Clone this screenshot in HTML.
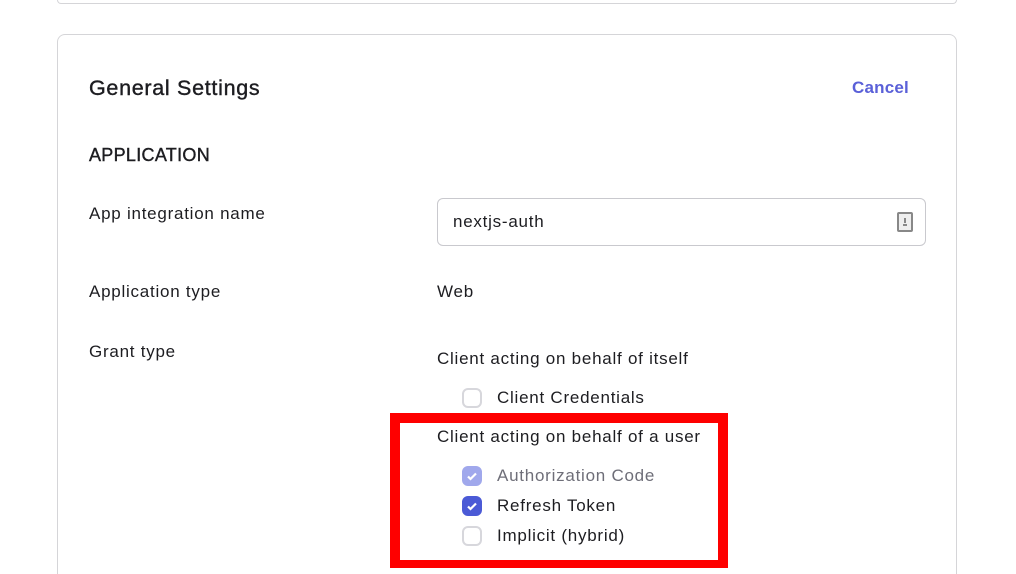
<!DOCTYPE html>
<html><head><style>
*{box-sizing:border-box;margin:0;padding:0}
html,body{width:1016px;height:574px;overflow:hidden}
body{background:#fff;position:relative;font-family:"Liberation Sans",sans-serif;color:#1d1d21}
.t{position:absolute;white-space:nowrap;font-size:17px;letter-spacing:0.75px}
.cb{position:absolute;left:462px;width:20px;height:20px;border-radius:6px;border:2px solid #d7d7dc;background:#fff}
.cb.on{background:#4b5ad6;border-color:#4b5ad6}
.cb.dis{background:#a0a8ec;border-color:#a0a8ec}
.cb svg{position:absolute;left:2px;top:2px}
</style></head><body>
<div style="position:absolute;left:57px;top:0;width:900px;height:4px;border:1px solid #d5d5d8;border-top:none;border-radius:0 0 6px 6px"></div>
<div style="position:absolute;left:57px;top:34px;width:900px;height:540px;border:1px solid #d5d5d8;border-bottom:none;border-radius:8px 8px 0 0"></div>
<div class="t" style="left:89px;top:76px;font-size:21.5px;letter-spacing:0.7px;-webkit-text-stroke:0.4px #1d1d21">General Settings</div>
<div class="t" style="left:852px;top:78px;font-size:17px;color:#5a60d8;font-weight:bold;letter-spacing:0.2px">Cancel</div>
<div class="t" style="left:89px;top:145px;font-size:18px;letter-spacing:0.3px;-webkit-text-stroke:0.4px #1d1d21">APPLICATION</div>
<div class="t" style="left:89px;top:204px">App integration name</div>
<div style="position:absolute;left:437px;top:198px;width:489px;height:48px;border:1px solid #c9c9ce;border-radius:6px"></div>
<div class="t" style="left:453px;top:212px">nextjs-auth</div>
<div style="position:absolute;left:897px;top:212px;width:16px;height:20px;border:2px solid #888;border-radius:2px;background:#eee"><div style="position:absolute;left:4px;top:3px;width:4px;height:9px;border-bottom:2px solid #888;background:linear-gradient(#888,#888) center/2px 5px no-repeat"></div></div>
<div class="t" style="left:89px;top:282px">Application type</div>
<div class="t" style="left:437px;top:282px">Web</div>
<div class="t" style="left:89px;top:342px">Grant type</div>
<div class="t" style="left:437px;top:349px">Client acting on behalf of itself</div>
<div class="cb" style="top:388px"></div>
<div class="t" style="left:497px;top:388px">Client Credentials</div>
<div class="t" style="left:437px;top:427px">Client acting on behalf of a user</div>
<div class="cb dis" style="top:466px"><svg width="12" height="12" viewBox="0 0 12 12"><path d="M2 6.5l2.5 2.5L10 3.5" stroke="#fff" stroke-width="2.2" fill="none"/></svg></div>
<div class="t" style="left:497px;top:466px;color:#6e6e78">Authorization Code</div>
<div class="cb on" style="top:496px"><svg width="12" height="12" viewBox="0 0 12 12"><path d="M2 6.5l2.5 2.5L10 3.5" stroke="#fff" stroke-width="2.2" fill="none"/></svg></div>
<div class="t" style="left:497px;top:496px">Refresh Token</div>
<div class="cb" style="top:526px"></div>
<div class="t" style="left:497px;top:526px">Implicit (hybrid)</div>
<div style="position:absolute;left:390px;top:413px;width:338px;height:155px;border:10px solid #fe0000;border-bottom-width:8px"></div>
</body></html>
